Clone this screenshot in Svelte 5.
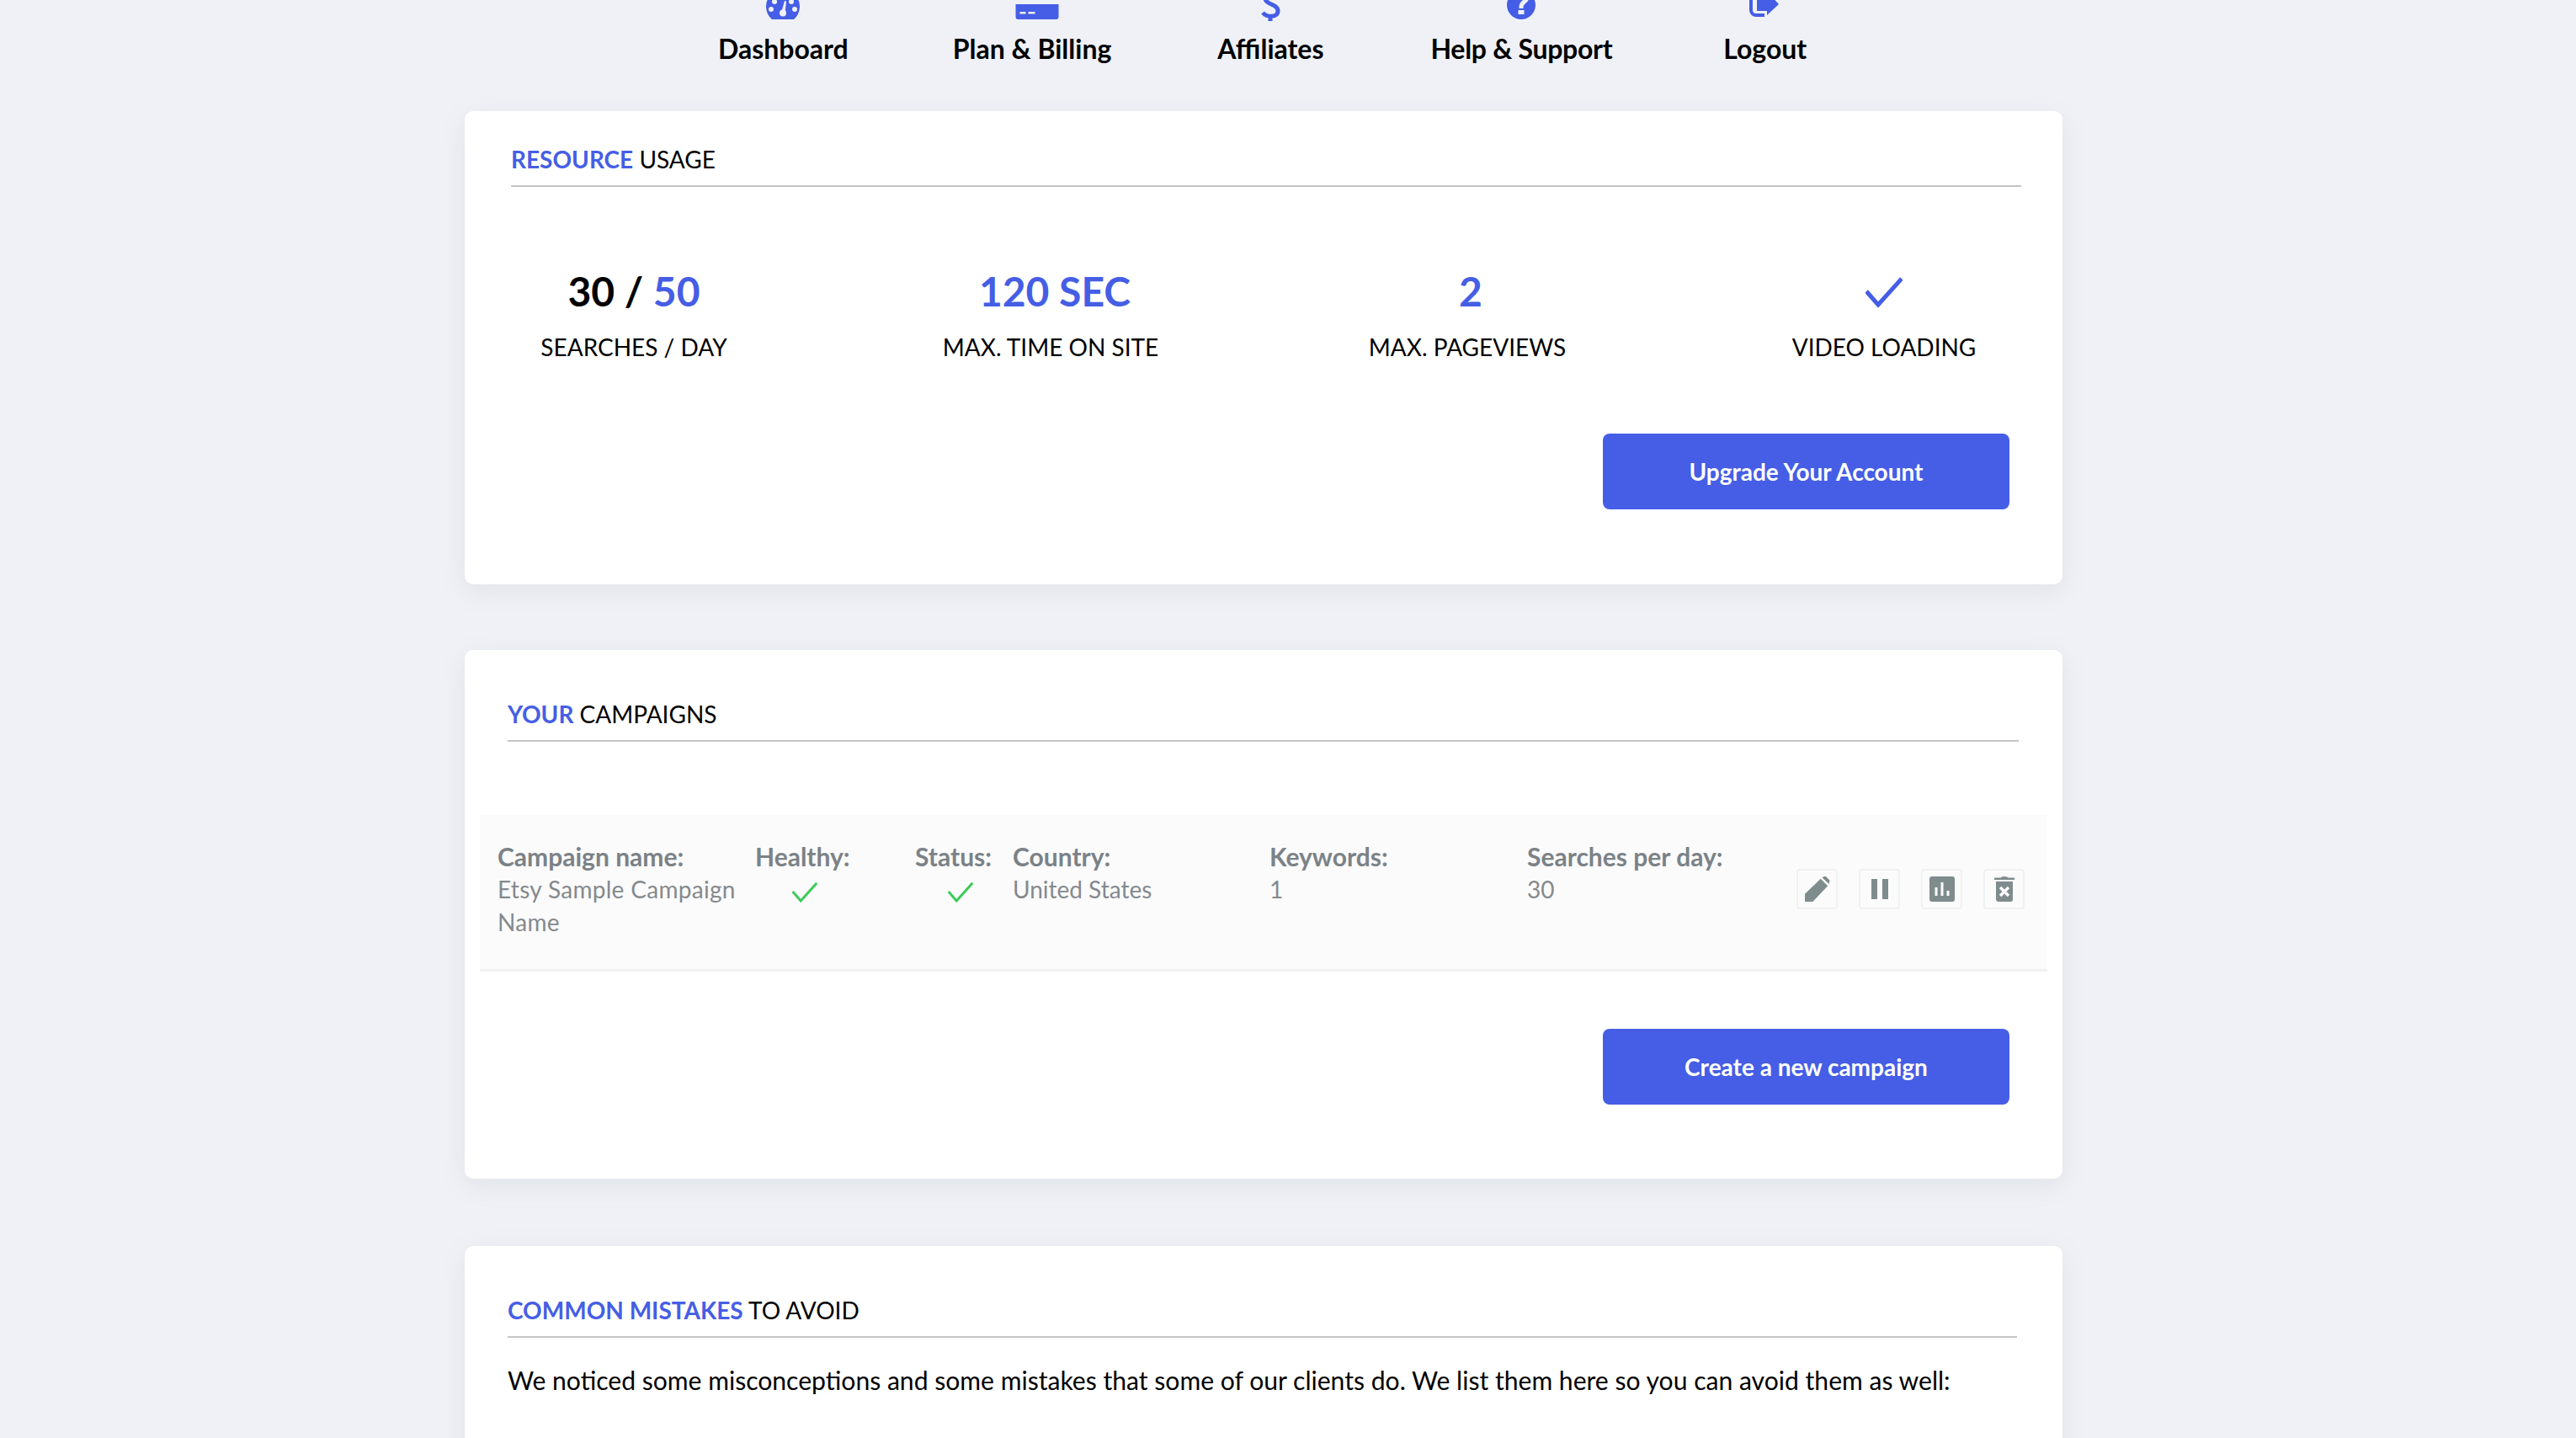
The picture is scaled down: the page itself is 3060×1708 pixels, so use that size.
<script>
	const navItems = [
		{ label: 'Dashboard', icon: 'gauge' },
		{ label: 'Plan & Billing', icon: 'card' },
		{ label: 'Affiliates', icon: 'dollar' },
		{ label: 'Help & Support', icon: 'help' },
		{ label: 'Logout', icon: 'logout' }
	];

	const campaignCols = [
		{ title: 'Country:', value: 'United States', cls: 'country' },
		{ title: 'Keywords:', value: '1', cls: 'keywords' },
		{ title: 'Searches per day:', value: '30', cls: 'searches' }
	];
</script>

{#snippet check(size, color, sw)}
	<svg class="check" width={size} height={size} viewBox="0 0 44 44" fill="none">
		<path d="M1 22 L15 38 L43 7" stroke={color} stroke-width={sw} />
	</svg>
{/snippet}

<div class="page">
	<nav class="nav">
		{#each navItems as item}
			<a class="nav-item" href="#top">
				
				<span class="nav-icon">
					{#if item.icon === 'gauge'}
						<svg width="44" height="62" viewBox="-22 -24 44 62">
							<path fill="#455ee5" d="M-13 23 A20 20 0 1 1 13 23 Q13 23 12 23 Z" />
							<g fill="#eff1f6">
								<circle cx="-14" cy="11" r="3" />
								<circle cx="14" cy="11" r="3" />
								<circle cx="-10" cy="2" r="3" />
								<circle cx="10" cy="2" r="3" />
								<circle cx="0" cy="15.500" r="4" />
								<path d="M-2 15 L2 1 L4 1.500 L2.500 16 Z" />
							</g>
						</svg>
					{:else if item.icon === 'card'}
						<svg class="card-icon" width="52" height="62" viewBox="-26 -24 52 62">
							<path fill="#455ee5" d="M-25.500 5 H25.500 V20 a3 3 0 0 1 -3 3 H-22.500 a3 3 0 0 1 -3 -3 Z" />
							<rect x="-20.500" y="14" width="7" height="2.500" fill="#eff1f6" />
							<rect x="-10.500" y="14" width="8" height="2.500" fill="#eff1f6" />
						</svg>
					{:else if item.icon === 'dollar'}
						<svg width="26" height="62" viewBox="-13 -24 26 62" fill="none">
							<path stroke="#455ee5" stroke-width="5" d="M2 -10 C-8 -10 -8 -2 -4 2 C0 6 9 6 9 13 C9 21 -4 21 -9 15" />
							<path stroke="#455ee5" stroke-width="5" d="M0 18 V25" />
						</svg>
					{:else if item.icon === 'help'}
						<svg width="36" height="62" viewBox="-18 -24 36 62">
							<circle cx="0" cy="6" r="17" fill="#455ee5" />
							<path fill="none" stroke="#eff1f6" stroke-width="5" d="M-6 -4 C-6 -12 7 -12 7 -3 C7 2 0 2 0 8 V10" />
							<rect x="-3.500" y="12" width="7" height="5" fill="#eff1f6" />
						</svg>
					{:else}
						<svg width="40" height="62" viewBox="-20 -24 40 62">
							<path fill="none" stroke="#455ee5" stroke-width="4" d="M-17 -4 V12 a6 6 0 0 0 6 6 H-1" />
							<path fill="#455ee5" d="M-10 -10 H2 L16 5 L2 18 V13 H-10 Z" />
						</svg>
					{/if}
				</span>
				<span class="nav-label">{item.label}</span>
			</a>
		{/each}
	</nav>

	<section class="card usage">
		<h2 class="heading"><b>RESOURCE</b> USAGE</h2>
		<div class="stats">
			<div class="stat">
				<div class="value dark">30 / <span class="blue">50</span></div>
				<div class="label">SEARCHES / DAY</div>
			</div>
			<div class="stat">
				<div class="value blue shift">120 SEC</div>
				<div class="label">MAX. TIME ON SITE</div>
			</div>
			<div class="stat">
				<div class="value blue shift-sm">2</div>
				<div class="label">MAX. PAGEVIEWS</div>
			</div>
			<div class="stat">
				<div class="value">{@render check(44, '#455ee5', 5)}</div>
				<div class="label">VIDEO LOADING</div>
			</div>
		</div>
		<div class="actions">
			<button class="primary">Upgrade Your Account</button>
		</div>
	</section>

	<section class="card campaigns">
		<h2 class="heading"><b>YOUR</b> CAMPAIGNS</h2>
		<div class="row">
			<div class="col name">
				<strong>Campaign name:</strong>
				<span>Etsy Sample Campaign Name</span>
			</div>
			<div class="col healthy">
				<strong>Healthy:</strong>
				<span class="tick">{@render check(30, '#3ccb5a', 4.5)}</span>
			</div>
			<div class="col status">
				<strong>Status:</strong>
				<span class="tick">{@render check(30, '#3ccb5a', 4.5)}</span>
			</div>
			{#each campaignCols as col}
				<div class="col {col.cls}">
					<strong>{col.title}</strong>
					<span>{col.value}</span>
				</div>
			{/each}
			<div class="tools">
				<button class="tool" aria-label="Edit">
					<svg width="30" height="30" viewBox="0 0 32 32">
						<path fill="#7f8c8d" d="M0 32 V22 L20 3 L29 12 L10 32 Z" />
						<path fill="#7f8c8d" d="M24 0 a2 2 0 0 1 2.500 0 L31 4.500 a2 2 0 0 1 0 2.500 L30.500 9.500 L22 1.500 Z" />
					</svg>
				</button>
				<button class="tool" aria-label="Pause">
					<svg width="20" height="24" viewBox="0 0 20 24">
						<rect width="7" height="24" fill="#7f8c8d" />
						<rect x="13" width="7" height="24" fill="#7f8c8d" />
					</svg>
				</button>
				<button class="tool" aria-label="Stats">
					<svg width="30" height="30" viewBox="0 0 30 30">
						<rect width="30" height="30" rx="3" fill="#7f8c8d" />
						<rect x="6.500" y="13" width="3" height="10" fill="#fbfbfb" />
						<rect x="13.500" y="7" width="3" height="16" fill="#fbfbfb" />
						<rect x="20.500" y="17" width="3" height="6" fill="#fbfbfb" />
					</svg>
				</button>
				<button class="tool" aria-label="Delete">
					<svg width="24" height="30" viewBox="0 0 24 30">
						<path fill="#7f8c8d" d="M0 1.500 H8 a4 1.500 0 0 1 8 0 H24 V4 H0 Z" />
						<path fill="#7f8c8d" d="M2 6 H22 V27 a3 3 0 0 1 -3 3 H5 a3 3 0 0 1 -3 -3 Z" />
						<path stroke="#fbfbfb" stroke-width="3.500" d="M7 13 L17 23 M17 13 L7 23" />
					</svg>
				</button>
			</div>
		</div>
		<div class="actions">
			<button class="primary">Create a new campaign</button>
		</div>
	</section>

	<section class="card mistakes">
		<h2 class="heading"><b>COMMON MISTAKES</b> TO AVOID</h2>
		<p class="intro">We noticed some misconceptions and some mistakes that some of our clients do. We list them here so you can avoid them as well:</p>
	</section>
</div>

<style>
	:global(body) {
		margin: 0;
		background: #eff1f6;
		font-family: Lato, "Open Sans", sans-serif;
		height: 1708px;
		overflow: hidden;
	}
	.page {
		width: 1898px;
		margin-left: 552px;
		display: flex;
		flex-direction: column;
	}
	.nav {
		display: flex;
		height: 156px;
		margin-left: 239px;
		margin-top: -24px;
	}
	.nav-item {
		display: flex;
		flex-direction: column;
		align-items: center;
		padding: 0 62px;
		color: #000;
		text-decoration: none;
	}
	.nav-item:nth-child(3) {
		margin-left: 2px;
	}
	.nav-item:nth-child(4) {
		margin-left: 3px;
		letter-spacing: -0.3px;
	}
	.nav-item:last-child {
		margin-left: 8px;
	}
	.nav-icon {
		height: 62px;
		display: flex;
		align-items: flex-start;
	}
	.nav-icon svg {
		display: block;
	}
	.card-icon {
		margin-left: 12px;
	}
	.nav-label {
		font-size: 32px;
		font-weight: 700;
		line-height: 40px;
		white-space: nowrap;
	}
	.card {
		background: #fff;
		border-radius: 10px;
		box-shadow: 0 8px 30px rgba(120, 135, 150, 0.12);
		box-sizing: border-box;
		margin-bottom: 78px;
	}
	.usage {
		height: 562px;
		padding: 36px 49px 0 55px;
	}
	.campaigns {
		height: 628px;
		padding: 55px 18px 0;
		margin-bottom: 80px;
	}
	.mistakes {
		height: 400px;
		padding: 55px 54px 0 51px;
	}
	.heading {
		margin: 0;
		height: 54px;
		line-height: 42px;
		font-size: 28px;
		font-weight: 400;
		color: #000;
		border-bottom: 2px solid #c3c5c7;
		box-sizing: border-box;
	}
	.heading b {
		color: #455ee5;
		font-weight: 700;
	}
	.campaigns .heading {
		margin: 0 34px 0 33px;
	}
	.stats {
		display: flex;
		justify-content: space-between;
		margin: 92px -17px 0 -34px;
	}
	.stat {
		width: 360px;
		display: flex;
		flex-direction: column;
		align-items: center;
	}
	.value {
		font-size: 48px;
		font-weight: 700;
		line-height: 64px;
		height: 64px;
		display: flex;
		align-items: center;
		gap: 12px;
		white-space: pre;
	}
	.value.dark {
		color: #000;
		display: block;
	}
	.blue {
		color: #455ee5;
	}
	.shift {
		padding-left: 10px;
	}
	.shift-sm {
		padding-left: 8px;
	}
	.check {
		display: block;
	}
	.label {
		margin-top: 16px;
		font-size: 28px;
		line-height: 36px;
		color: #000;
	}
	.actions {
		display: flex;
		justify-content: flex-end;
	}
	.usage .actions {
		margin-top: 85px;
		padding-right: 14px;
	}
	.campaigns .actions {
		margin-top: 68px;
		padding-right: 45px;
	}
	.primary {
		width: 483px;
		height: 90px;
		border: none;
		border-radius: 8px;
		background: #455ee5;
		color: #fff;
		font-family: inherit;
		font-size: 28px;
		font-weight: 700;
	}
	.row {
		display: grid;
		grid-template-columns: 306px 190px 116px 305px 306px 320px auto;
		margin-top: 87px;
		box-sizing: border-box;
		height: 186px;
		padding: 30px 0 0 21px;
		background: #fbfbfb;
		border-bottom: 3px solid #f1f1f1;
		font-size: 28px;
		line-height: 39px;
		color: #85898d;
	}
	.col {
		display: flex;
		flex-direction: column;
	}
	.col strong {
		color: #7b8287;
		font-size: 30px;
		font-weight: 700;
		white-space: nowrap;
	}
	.name span {
		width: 296px;
		letter-spacing: 0.3px;
	}
	.tick {
		display: block;
		margin-top: 7px;
	}
	.healthy .tick {
		margin-left: 44px;
	}
	.status .tick {
		margin-left: 39px;
	}
	.tools {
		display: flex;
		gap: 25px;
		margin-top: 34px;
		align-self: start;
	}
	.tool {
		width: 49px;
		height: 48px;
		padding: 0;
		display: flex;
		align-items: center;
		justify-content: center;
		background: #fbfbfb;
		border: 2px solid #f0f1f1;
		border-radius: 4px;
	}
	.intro {
		margin: 30px 0 0;
		font-size: 30.1px;
		line-height: 40px;
		color: #000;
	}
</style>
